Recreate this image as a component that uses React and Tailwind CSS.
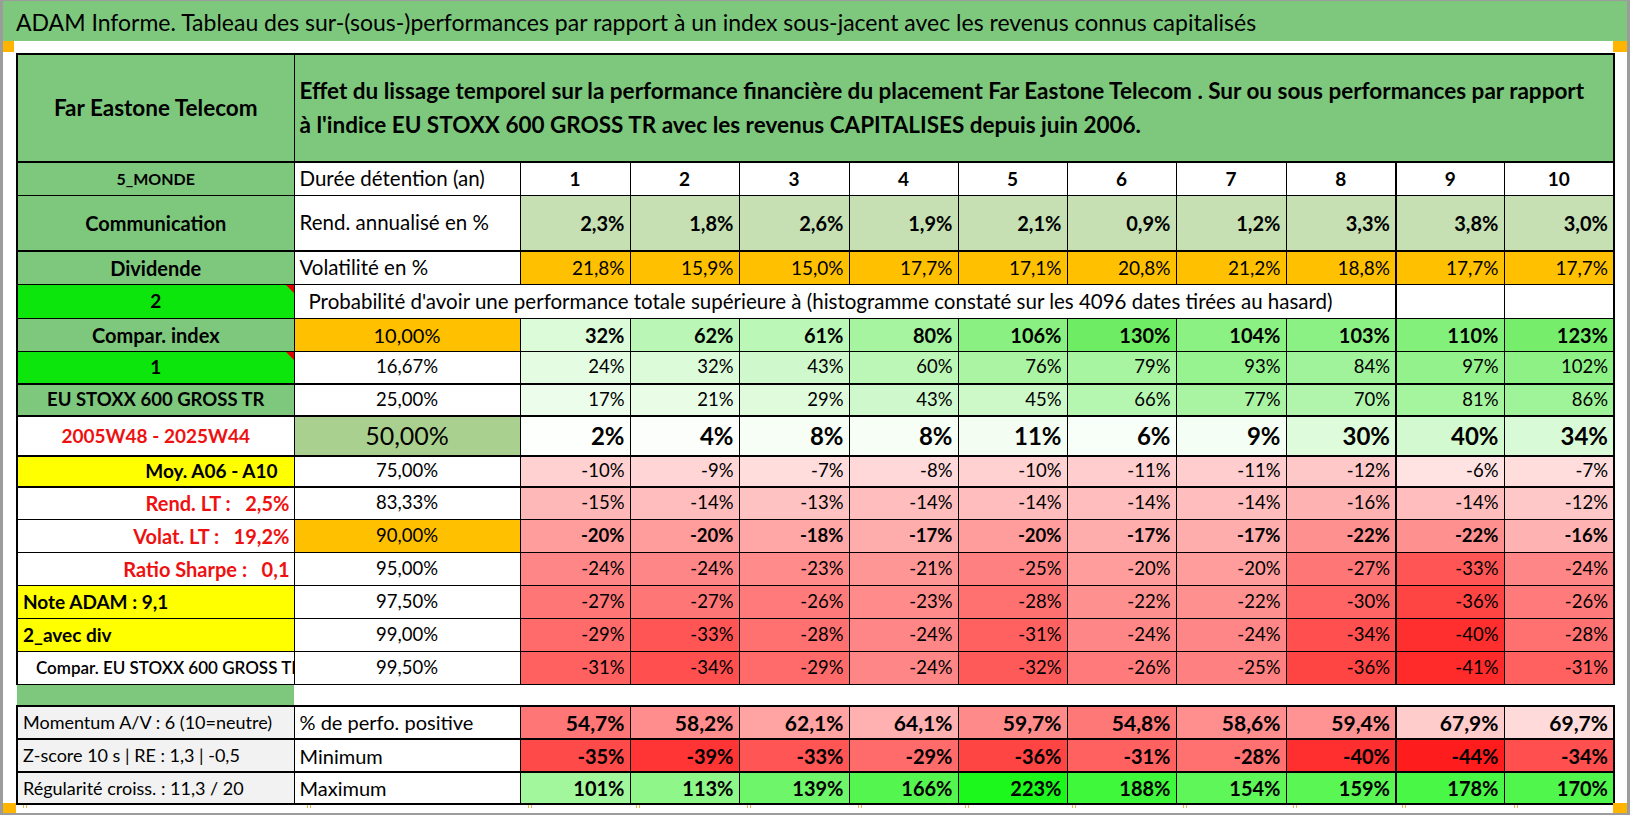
import React from 'react';

const R = {
  6: 'bg-[#ffe2e2]', 7: 'bg-[#ffdddd]', 8: 'bg-[#ffd9d9]', 9: 'bg-[#ffd5d5]', 10: 'bg-[#ffd1d1]',
  11: 'bg-[#ffcdcd]', 12: 'bg-[#ffc8c8]', 13: 'bg-[#ffc2c2]', 14: 'bg-[#ffbdbd]', 15: 'bg-[#ffb8b8]',
  16: 'bg-[#ffb2b2]', 17: 'bg-[#ffacac]', 18: 'bg-[#ffa7a7]', 20: 'bg-[#ff9c9c]', 21: 'bg-[#ff9696]',
  22: 'bg-[#ff9090]', 23: 'bg-[#ff8b8b]', 24: 'bg-[#ff8686]', 25: 'bg-[#ff8080]', 26: 'bg-[#ff7b7b]',
  27: 'bg-[#ff7676]', 28: 'bg-[#ff7070]', 29: 'bg-[#ff6b6b]', 30: 'bg-[#ff6565]', 31: 'bg-[#ff6060]',
  32: 'bg-[#ff5a5a]', 33: 'bg-[#ff5555]', 34: 'bg-[#ff4f4f]', 35: 'bg-[#ff4a4a]', 36: 'bg-[#ff4444]',
  39: 'bg-[#ff3434]', 40: 'bg-[#ff2f2f]', 41: 'bg-[#ff2a2a]', 44: 'bg-[#ff1c1c]',
};

const G = {
  2: 'bg-[#fdfffd]', 4: 'bg-[#fbfefa]', 6: 'bg-[#f8fef8]', 8: 'bg-[#f6fef5]', 9: 'bg-[#f5fef4]',
  11: 'bg-[#f3fdf2]', 17: 'bg-[#ecfdeb]', 21: 'bg-[#e8fce6]', 24: 'bg-[#e4fce2]', 29: 'bg-[#dffbdc]',
  30: 'bg-[#defbdb]', 32: 'bg-[#dbfbd9]', 34: 'bg-[#d9fad6]', 40: 'bg-[#d2f9cf]', 43: 'bg-[#cff9cc]',
  45: 'bg-[#cdf9c9]', 60: 'bg-[#bcf7b7]', 61: 'bg-[#bbf7b6]', 62: 'bg-[#baf6b5]', 66: 'bg-[#b5f6b0]',
  70: 'bg-[#b1f5ac]', 76: 'bg-[#aaf4a4]', 77: 'bg-[#a9f4a3]', 79: 'bg-[#a7f4a1]', 80: 'bg-[#a6f4a0]',
  81: 'bg-[#a5f49e]', 84: 'bg-[#a1f39b]', 86: 'bg-[#9ff398]', 93: 'bg-[#97f290]', 97: 'bg-[#93f28b]',
  102: 'bg-[#8df185]', 103: 'bg-[#8cf184]', 104: 'bg-[#8bf183]', 106: 'bg-[#89f081]', 110: 'bg-[#84f07c]',
  123: 'bg-[#76ee6c]', 130: 'bg-[#6eed64]',
};

const neg = (arr) => arr.map((v) => ['-' + v + '%', R[v]]);
const pos = (arr) => arr.map((v) => [v + '%', G[v]]);

const rendAnn = ['2,3%', '1,8%', '2,6%', '1,9%', '2,1%', '0,9%', '1,2%', '3,3%', '3,8%', '3,0%'].map((t) => [t, 'bg-[#c6e0b4]']);
const volat = ['21,8%', '15,9%', '15,0%', '17,7%', '17,1%', '20,8%', '21,2%', '18,8%', '17,7%', '17,7%'].map((t) => [t, 'bg-[#ffc000]']);

const momentum = [
  ['54,7%', 'bg-[#ff7676]'], ['58,2%', 'bg-[#ff8d8d]'], ['62,1%', 'bg-[#ffa3a3]'], ['64,1%', 'bg-[#ffb0b0]'],
  ['59,7%', 'bg-[#ff8a8a]'], ['54,8%', 'bg-[#ff7878]'], ['58,6%', 'bg-[#ff8e8e]'], ['59,4%', 'bg-[#ff9393]'],
  ['67,9%', 'bg-[#ffcccc]'], ['69,7%', 'bg-[#ffdada]'],
];
const maxi = [
  ['101%', 'bg-[#a2f79c]'], ['113%', 'bg-[#8ff789]'], ['139%', 'bg-[#6ff56a]'], ['166%', 'bg-[#55f550]'],
  ['223%', 'bg-[#1cf81c]'], ['188%', 'bg-[#3ff83c]'], ['154%', 'bg-[#5ff65a]'], ['159%', 'bg-[#59f654]'],
  ['178%', 'bg-[#49f746]'], ['170%', 'bg-[#51f64d]'],
];

const TD = 'border border-black p-0 overflow-hidden whitespace-nowrap';

function Data({ cells, cls = '', rowB = '' }) {
  return cells.map(([t, bg], i) => (
    <td
      key={i}
      className={`${TD} ${bg} ${cls} ${rowB} ${i === 8 ? 'border-l-2' : ''} ${i === 9 ? 'border-r-2' : ''} text-right pr-[5px]`}
    >
      {t}
    </td>
  ));
}

function Corner() {
  return (
    <span className="absolute top-0 right-0 w-0 h-0 border-l-[8px] border-l-transparent border-t-[8px] border-t-[#e00000]" />
  );
}

function Tick({ cls }) {
  return (
    <div className={`flex gap-[2px] mt-[2px] ${cls}`}>
      <span className="w-[1px] h-[3px] bg-[#e6b84c]" />
      <span className="w-[1px] h-[3px] bg-[#e6b84c]" />
    </div>
  );
}

const colWidths = ['w-[277px]', 'w-[226px]', 'w-[110px]', 'w-[109px]', 'w-[110px]', 'w-[109px]', 'w-[109px]', 'w-[109px]', 'w-[110px]', 'w-[110px]', 'w-[108px]', 'w-[110px]'];
const tickOffsets = ['ml-[7px]', 'ml-[14px]', 'ml-[9px]', 'ml-[7px]', 'ml-[9px]', 'ml-[10px]', 'ml-[8px]', 'ml-[6px]', 'ml-[8px]', 'ml-[8px]', 'ml-[7px]', 'ml-[11px]'];

export default function App() {
  return (
    <div className="w-[1630px] h-[815px] bg-white border-l-[3px] border-r-[3px] border-t border-b-2 border-[#9c9c9c] font-['Lato',sans-serif] text-black flex flex-col overflow-hidden">
      <div className="h-[40px] shrink-0 bg-[#7ec87e] flex items-center pl-[13px] pt-[3px] text-[23px] whitespace-nowrap">
        ADAM Informe. Tableau des sur-(sous-)performances par rapport à un index sous-jacent avec les revenus connus capitalisés
      </div>
      <div className="h-[12px] shrink-0 flex justify-between">
        <div className="w-[11px] h-[11px] shrink-0 bg-[#ffb400]" />
        <div className="w-[14px] h-[11px] shrink-0 bg-[#ffb400]" />
      </div>
      <div className="pl-[13px] h-[750px] shrink-0">
        <table className="table-fixed border-collapse w-[1597px]">
          <colgroup>
            {colWidths.map((w, i) => (
              <col key={i} className={w} />
            ))}
          </colgroup>
          <tbody>
            <tr className="h-[108px]">
              <td className={`${TD} border-t-2 border-b-2 border-l-2 bg-[#7ec87e] text-center font-bold text-[22.5px]`}>Far Eastone Telecom</td>
              <td colSpan={11} className={`${TD} border-t-2 border-b-2 border-r-2 bg-[#7ec87e] font-bold text-[22.5px] leading-[34px] pl-[5px] text-left`}>
                Effet du lissage temporel sur la performance financière du placement Far Eastone Telecom . Sur ou sous performances par rapport
                <br />
                à l'indice EU STOXX 600 GROSS TR avec les revenus CAPITALISES depuis juin 2006.
              </td>
            </tr>

            <tr className="h-[33px]">
              <td className={`${TD} border-l-2 bg-[#7ec87e] text-center font-bold text-[16px]`}>5_MONDE</td>
              <td className={`${TD} text-[20.5px] text-left pl-[5px]`}>Durée détention (an)</td>
              {[1, 2, 3, 4, 5, 6, 7, 8, 9, 10].map((n, i) => (
                <td key={n} className={`${TD} text-center font-bold text-[19px] ${i === 8 ? 'border-l-2' : ''} ${i === 9 ? 'border-r-2' : ''}`}>{n}</td>
              ))}
            </tr>

            <tr className="h-[56px]">
              <td className={`${TD} border-l-2 border-b-2 bg-[#7ec87e] text-center font-bold text-[20px]`}>Communication</td>
              <td className={`${TD} border-b-2 text-[20.5px] text-left pl-[5px]`}>Rend. annualisé en %</td>
              <Data cells={rendAnn} cls="font-bold text-[20px]" rowB="border-b-2" />
            </tr>

            <tr className="h-[33px]">
              <td className={`${TD} border-l-2 bg-[#7ec87e] text-center font-bold text-[20px]`}>Dividende</td>
              <td className={`${TD} text-[20.5px] text-left pl-[5px]`}>Volatilité en %</td>
              <Data cells={volat} cls="text-[19px]" />
            </tr>

            <tr className="h-[34px]">
              <td className={`${TD} relative border-l-2 bg-[#0ce60c] text-center font-bold text-[19px]`}>
                2
                <Corner />
              </td>
              <td colSpan={9} className={`${TD} text-[20.5px] text-left pl-[14px]`}>
                Probabilité d'avoir une performance totale supérieure à (histogramme constaté sur les 4096 dates tirées au hasard)
              </td>
              <td className={`${TD} border-l-2`} />
              <td className={`${TD} border-r-2`} />
            </tr>

            <tr className="h-[33px]">
              <td className={`${TD} border-l-2 bg-[#7ec87e] text-center font-bold text-[20px]`}>Compar. index</td>
              <td className={`${TD} bg-[#ffc000] text-center text-[20px]`}>10,00%</td>
              <Data cells={pos([32, 62, 61, 80, 106, 130, 104, 103, 110, 123])} cls="font-bold text-[20px]" />
            </tr>

            <tr className="h-[33px]">
              <td className={`${TD} relative border-l-2 border-b-2 bg-[#0ce60c] text-center font-bold text-[19px]`}>
                1
                <Corner />
              </td>
              <td className={`${TD} border-b-2 text-center text-[18.5px]`}>16,67%</td>
              <Data cells={pos([24, 32, 43, 60, 76, 79, 93, 84, 97, 102])} cls="text-[18.5px]" rowB="border-b-2" />
            </tr>

            <tr className="h-[32px]">
              <td className={`${TD} border-l-2 border-b-2 bg-[#7ec87e] text-center font-bold text-[18.5px]`}>EU STOXX 600 GROSS TR</td>
              <td className={`${TD} border-b-2 text-center text-[18.5px]`}>25,00%</td>
              <Data cells={pos([17, 21, 29, 43, 45, 66, 77, 70, 81, 86])} cls="text-[18.5px]" rowB="border-b-2" />
            </tr>

            <tr className="h-[32px]">
              <td className={`${TD} border-l-2 border-b-2 text-center font-bold text-[19px] text-[#ee1111]`}>2005W48 - 2025W44</td>
              <td className={`${TD} border-b-2 bg-[#a9d08e] text-center text-[25px]`}>50,00%</td>
              <Data cells={pos([2, 4, 8, 8, 11, 6, 9, 30, 40, 34])} cls="font-bold text-[24px]" rowB="border-b-2" />
            </tr>

            <tr className="h-[31px]">
              <td className={`${TD} border-l-2 border-b-2 bg-[#ffff00] text-right pr-[16px] font-bold text-[19px]`}>Moy. A06 - A10</td>
              <td className={`${TD} border-b-2 text-center text-[18.5px]`}>75,00%</td>
              <Data cells={neg([10, 9, 7, 8, 10, 11, 11, 12, 6, 7])} cls="text-[18.5px]" rowB="border-b-2" />
            </tr>

            <tr className="h-[33px]">
              <td className={`${TD} border-l-2 text-right pr-[4px] font-bold text-[20px] text-[#ee1111] whitespace-pre`}>{'Rend. LT :   2,5%'}</td>
              <td className={`${TD} text-center text-[18.5px]`}>83,33%</td>
              <Data cells={neg([15, 14, 13, 14, 14, 14, 14, 16, 14, 12])} cls="text-[18.5px]" />
            </tr>

            <tr className="h-[33px]">
              <td className={`${TD} border-l-2 text-right pr-[4px] font-bold text-[20px] text-[#ee1111] whitespace-pre`}>{'Volat. LT :   19,2%'}</td>
              <td className={`${TD} bg-[#ffc000] text-center text-[18.5px]`}>90,00%</td>
              <Data cells={neg([20, 20, 18, 17, 20, 17, 17, 22, 22, 16])} cls="font-bold text-[18.5px]" />
            </tr>

            <tr className="h-[33px]">
              <td className={`${TD} border-l-2 text-right pr-[4px] font-bold text-[20px] text-[#ee1111] whitespace-pre`}>{'Ratio Sharpe :   0,1'}</td>
              <td className={`${TD} text-center text-[18.5px]`}>95,00%</td>
              <Data cells={neg([24, 24, 23, 21, 25, 20, 20, 27, 33, 24])} cls="text-[18.5px]" />
            </tr>

            <tr className="h-[33px]">
              <td className={`${TD} border-l-2 bg-[#ffff00] text-left pl-[5px] font-bold text-[19px]`}>Note ADAM : 9,1</td>
              <td className={`${TD} text-center text-[18.5px]`}>97,50%</td>
              <Data cells={neg([27, 27, 26, 23, 28, 22, 22, 30, 36, 26])} cls="text-[18.5px]" />
            </tr>

            <tr className="h-[33px]">
              <td className={`${TD} border-l-2 bg-[#ffff00] text-left pl-[5px] font-bold text-[19px]`}>2_avec div</td>
              <td className={`${TD} text-center text-[18.5px]`}>99,00%</td>
              <Data cells={neg([29, 33, 28, 24, 31, 24, 24, 34, 40, 28])} cls="text-[18.5px]" />
            </tr>

            <tr className="h-[33px]">
              <td className={`${TD} border-l-2 text-left pl-[18px] font-semibold text-[17px]`}>Compar. EU STOXX 600 GROSS TR</td>
              <td className={`${TD} text-center text-[18.5px]`}>99,50%</td>
              <Data cells={neg([31, 34, 29, 24, 32, 26, 25, 36, 41, 31])} cls="text-[18.5px]" />
            </tr>

            <tr className="h-[21px]">
              <td className="border-0 p-0 bg-[#7ec87e]" />
              <td colSpan={11} className="border-0 p-0" />
            </tr>

            <tr className="h-[33px]">
              <td className={`${TD} border-t-2 border-b-2 border-l-2 bg-[#f2f2f2] text-left pl-[5px] text-[18px]`}>Momentum A/V : 6 (10=neutre)</td>
              <td className={`${TD} border-t-2 border-b-2 text-left pl-[5px] text-[20px]`}>% de perfo. positive</td>
              <Data cells={momentum} cls="font-bold text-[21px] border-t-2" rowB="border-b-2" />
            </tr>

            <tr className="h-[33px]">
              <td className={`${TD} border-b-2 border-l-2 bg-[#f2f2f2] text-left pl-[5px] text-[18px]`}>Z-score 10 s | RE : 1,3 | -0,5</td>
              <td className={`${TD} border-b-2 text-left pl-[5px] text-[20px]`}>Minimum</td>
              <Data cells={neg([35, 39, 33, 29, 36, 31, 28, 40, 44, 34])} cls="font-bold text-[20px]" rowB="border-b-2" />
            </tr>

            <tr className="h-[32px]">
              <td className={`${TD} border-b-2 border-l-2 bg-[#f2f2f2] text-left pl-[5px] text-[18px]`}>Régularité croiss. : 11,3 / 20</td>
              <td className={`${TD} border-b-2 text-left pl-[5px] text-[20px]`}>Maximum</td>
              <Data cells={maxi} cls="font-bold text-[20px]" rowB="border-b-2" />
            </tr>
          </tbody>
        </table>
      </div>
      <div className="flex-1 flex items-end">
        <div className="w-[13px] h-[10px] shrink-0 bg-[#ffb400]" />
        <div className="w-[1597px] h-full shrink-0 grid grid-cols-[277px_226px_110px_109px_110px_109px_109px_109px_110px_110px_108px_110px]">
          {tickOffsets.map((o, i) => (
            <Tick key={i} cls={o} />
          ))}
        </div>
        <div className="w-[14px] h-[10px] shrink-0 bg-[#ffb400]" />
      </div>
    </div>
  );
}
